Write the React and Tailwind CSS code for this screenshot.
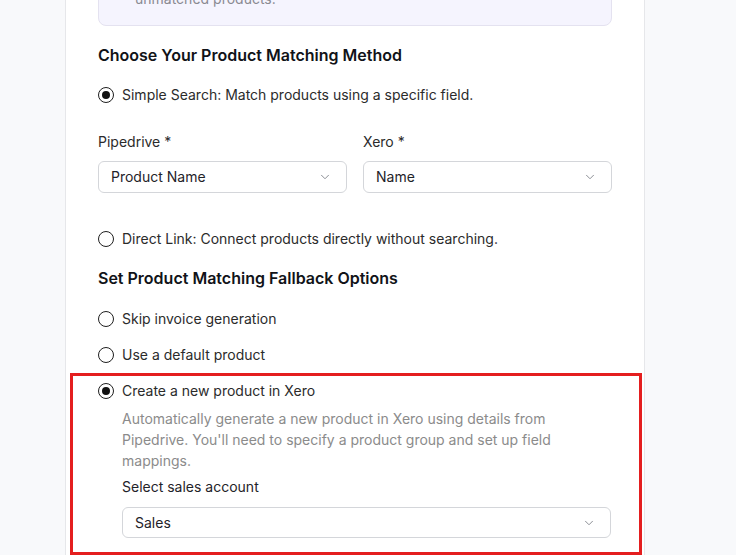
import { ChevronDown } from 'lucide-react';

const Radio = ({ checked, label }) => (
  <div className="flex items-center gap-2 h-5">
    <span className="w-4 h-4 rounded-full border-[1.5px] border-[#1f1f1f] flex items-center justify-center shrink-0">
      {checked && <span className="w-2 h-2 rounded-full bg-[#111]" />}
    </span>
    <span className="text-sm leading-5 text-[#2b2b2b]">{label}</span>
  </div>
);

const Select = ({ value, className = '' }) => (
  <div
    className={`flex items-center justify-between border border-[#d4d6da] rounded-md bg-white pl-3 pr-[14px] ${className}`}
  >
    <span className="text-sm text-[#1f2329]">{value}</span>
    <ChevronDown size={14} strokeWidth={1.5} className="text-[#7b7f86]" />
  </div>
);

export default function App() {
  return (
    <div
      className="w-[736px] h-[555px] overflow-hidden bg-[#f8f9fb] flex"
      style={{ fontFamily: 'Inter, "Noto Sans", sans-serif' }}
    >
      <div className="w-[65px] shrink-0" />
      <div className="w-[580px] shrink-0 bg-white border-x border-[#e6e7ea] px-8 flex flex-col">
        {/* info box, mostly scrolled out of view */}
        <div className="mt-[-48px] border border-[#e4e2f0] bg-[#f5f4fe] rounded-lg pl-9 pr-4 py-4 text-sm leading-5 text-[#8a8a92]">
          <p className="whitespace-nowrap">If no match is found, the fallback option below will handle</p>
          <p>unmatched products.</p>
        </div>

        <h2 className="mt-[17px] text-base leading-6 font-semibold text-[#111318]">
          Choose Your Product Matching Method
        </h2>

        <div className="mt-[18px]">
          <Radio checked label="Simple Search: Match products using a specific field." />
        </div>

        <div className="mt-[27px] grid grid-cols-2 gap-4">
          <div className="flex flex-col">
            <label className="text-sm leading-5 text-[#2b2b2b]">Pipedrive *</label>
            <Select value="Product Name" className="mt-[9px] h-8" />
          </div>
          <div className="flex flex-col">
            <label className="text-sm leading-5 text-[#2b2b2b]">Xero *</label>
            <Select value="Name" className="mt-[9px] h-8" />
          </div>
        </div>

        <div className="mt-9">
          <Radio label="Direct Link: Connect products directly without searching." />
        </div>

        <h2 className="mt-[17px] text-base leading-6 font-semibold text-[#111318]">
          Set Product Matching Fallback Options
        </h2>

        <div className="mt-[19px]">
          <Radio label="Skip invoice generation" />
        </div>
        <div className="mt-4">
          <Radio label="Use a default product" />
        </div>

        <div className="mt-2 -ml-7 -mr-[30px] border-[3px] border-[#e41e1f] pl-[25px] pr-[28px] pt-[5px] pb-[14px]">
          <Radio checked label="Create a new product in Xero" />
          <div className="pl-6">
            <p className="mt-[7px] text-sm leading-[21px] text-[#8b8b8b]">
              Automatically generate a new product in Xero using details from Pipedrive. You'll need to specify a
              product group and set up field mappings.
            </p>
            <p className="mt-[6px] text-sm leading-5 text-[#1f2329]">Select sales account</p>
            <Select value="Sales" className="mt-[10px] h-[31px]" />
          </div>
        </div>
      </div>
    </div>
  );
}
